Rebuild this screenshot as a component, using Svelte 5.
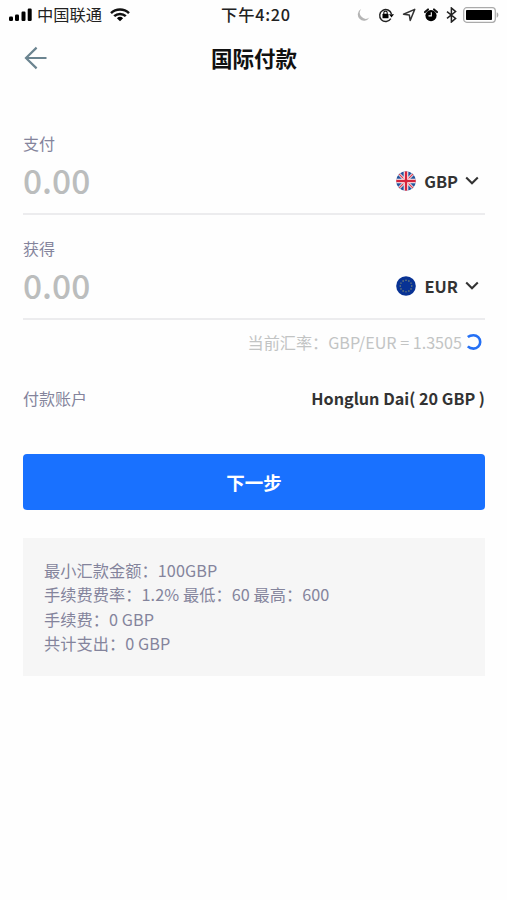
<script lang="ts">
	type Tfield = {
		label: string;
		currency: string;
	};

	const fields: Tfield[] = [
		{ label: '支付', currency: 'GBP' },
		{ label: '获得', currency: 'EUR' }
	];

	const details: string[] = [
		'最小汇款金额：100GBP',
		'手续费费率：1.2% 最低：60 最高：600',
		'手续费：0 GBP',
		'共计支出：0 GBP'
	];

	const stars = Array.from({ length: 12 }, (_, i) => ({
		x: 10 + 5.8 * Math.cos((i * Math.PI) / 6),
		y: 10 + 5.8 * Math.sin((i * Math.PI) / 6)
	}));
</script>

<div class="screen">
	<div class="status">
		<div class="carrier">
			<svg width="24" height="14" viewBox="0 0 24 14">
				<rect x="0" y="8.5" width="4" height="4.5" rx="1.2" />
				<rect x="6" y="6.5" width="4" height="6.5" rx="1.2" />
				<rect x="12.5" y="3.5" width="4" height="9.5" rx="1.2" />
				<rect x="18.7" y="0.5" width="4" height="12.5" rx="1.2" />
			</svg>
			<span>中国联通</span>
			<svg class="wifi" width="20" height="14" viewBox="0 0 20 14">
				<path d="M1 5.2a13 13 0 0 1 18 0M4.2 8.2a8.4 8.4 0 0 1 11.6 0" fill="none" stroke="#111" stroke-width="2.5" />
				<path d="M10 13.3 6.9 10.2a4.5 4.5 0 0 1 6.2 0z" />
			</svg>
		</div>
		<div class="time">下午4:20</div>
		<div class="indicators">
			<svg width="13" height="14" viewBox="0 0 13 14">
				<path d="M4.2 1A6 6 0 0 0 12.4 9.6 6.2 6.2 0 1 1 4.2 1z" fill="#b5b5b5" />
			</svg>
			<svg width="16" height="16" viewBox="0 0 16 16">
				<path d="M12.8 11.7A6 6 0 1 1 13.5 7" fill="none" stroke="#222" stroke-width="1.4" />
				<path d="M11 7.3h5l-2.5 3.2z" />
				<rect x="4.5" y="6.8" width="6" height="4.5" rx="0.6" />
				<path d="M5.8 7V5.8a1.7 1.7 0 0 1 3.4 0V7" fill="none" stroke="#111" stroke-width="1.1" />
			</svg>
			<svg width="14" height="14" viewBox="0 0 14 14">
				<path d="M12.7 1.4 8.2 12.5 7.3 6.9 1.5 6.2z" fill="none" stroke="#333" stroke-width="1.5" stroke-linejoin="round" />
			</svg>
			<svg width="14" height="14" viewBox="0 0 14 14">
				<circle cx="7" cy="7.6" r="5.6" />
				<path d="M1 4.1 4 1.4M13 4.1 10 1.4" stroke="#111" stroke-width="2" stroke-linecap="round" />
				<path d="M7.3 4.3v3.6H4.5" fill="none" stroke="#fff" stroke-width="1.1" />
			</svg>
			<svg width="11" height="16" viewBox="0 0 11 16">
				<path d="m1 4.6 8.6 6.8L5.4 15V1l4.2 3.6L1 11.4" fill="none" stroke="#222" stroke-width="1.5" />
			</svg>
			<svg class="battery" width="36" height="16" viewBox="0 0 36 16">
				<rect x="0.7" y="0.7" width="31.6" height="14.6" rx="3" fill="#fff" stroke="#aaa" stroke-width="1.2" />
				<rect x="3" y="3" width="26" height="10" rx="0.8" fill="#000" />
				<path d="M33.7 5.3c2.2.8 2.2 4.6 0 5.4z" fill="#aaa" />
			</svg>
		</div>
	</div>

	<header>
		<button class="back" aria-label="返回">
			<svg width="24" height="24" viewBox="0 0 24 24" fill="none" stroke="#6b8490" stroke-width="2.2">
				<path d="M22.5 12H2M12.6 1.6 2 12l10.6 10.4" />
			</svg>
		</button>
		<h1>国际付款</h1>
	</header>

	<main>
		{#each fields as field}
			<section class="field">
				<div class="label">{field.label}</div>
				<div class="row">
					<span class="amount">0.00</span>
					<button class="currency">
						{#if field.currency === 'GBP'}
							<svg width="20" height="20" viewBox="0 0 20 20">
								<clipPath id="round"><circle cx="10" cy="10" r="9.8" /></clipPath>
								<g clip-path="url(#round)">
									<rect width="20" height="20" fill="#26549b" />
									<path d="m2 2 16 16M18 2 2 18" stroke="#fff" stroke-width="2.8" />
									<path d="m2 2 16 16M18 2 2 18" stroke="#d8455a" stroke-width="1.3" />
									<path d="M10 0v20M0 10h20" stroke="#fff" stroke-width="4.6" />
									<path d="M10 0v20M0 10h20" stroke="#d6243c" stroke-width="2.5" />
								</g>
							</svg>
						{:else}
							<svg width="20" height="20" viewBox="0 0 20 20">
								<circle cx="10" cy="10" r="9.8" fill="#083294" />
								{#each stars as star}
									<circle cx={star.x} cy={star.y} r="0.65" fill="#a4a568" />
								{/each}
							</svg>
						{/if}
						<span class="code">{field.currency}</span>
						<svg width="14" height="10" viewBox="0 0 14 10">
							<path d="m1.2 1.6 5.8 5.6 5.8-5.6" fill="none" stroke="#333" stroke-width="2.1" />
						</svg>
					</button>
				</div>
			</section>
		{/each}

		<div class="rate">
			<span>当前汇率：GBP/EUR = 1.3505</span>
			<svg width="16" height="18" viewBox="0 0 16 18">
				<path d="M1.8 4Q4 2.2 7.5 2.2A6.7 6.7 0 0 1 7.5 15.6Q4 15.6 1.8 13.4" fill="none" stroke="#2470f5" stroke-width="2.6" />
			</svg>
		</div>

		<div class="account">
			<span class="label">付款账户</span>
			<span class="owner">Honglun Dai( 20 GBP )</span>
		</div>

		<button class="next">下一步</button>

		<div class="details">
			{#each details as line}
				<p>{line}</p>
			{/each}
		</div>
	</main>
</div>

<style>
	:global(body) {
		margin: 0;
		background: #fefefe;
	}

	.screen {
		min-height: 900px;
		font-family: 'Noto Sans CJK SC', sans-serif;
		color: #333;
	}

	svg {
		display: block;
		flex: none;
	}

	button {
		border: 0;
		padding: 0;
		background: none;
		font-family: inherit;
		color: inherit;
	}

	.status {
		display: grid;
		grid-template-columns: 1fr auto 1fr;
		align-items: center;
		height: 29px;
		padding: 0 8px 0 9px;
		font-size: 16.3px;
		line-height: 29px;
		color: #222;
	}

	.carrier {
		display: flex;
		align-items: center;
		gap: 4px;
	}

	.wifi {
		margin-left: 4px;
	}

	.time {
		padding-left: 4px;
		font-weight: 500;
		letter-spacing: 0.75px;
	}

	.indicators {
		display: flex;
		justify-content: flex-end;
		align-items: center;
		gap: 8px;
	}

	.battery {
		margin-left: -2px;
	}

	header {
		display: grid;
		grid-template-columns: 1fr auto 1fr;
		align-items: center;
		height: 58px;
		padding: 0 23px 0 24px;
	}

	.back {
		justify-self: start;
	}

	h1 {
		margin: 0;
		font-size: 21.5px;
		line-height: 30px;
		font-weight: 700;
		color: #111;
	}

	main {
		padding: 43px 22px 0 23px;
	}

	.field {
		height: 83px;
		border-bottom: 2px solid #ececee;
		margin-bottom: 20px;
	}

	.label {
		font-size: 16px;
		line-height: 26px;
		color: #84849c;
	}

	.row {
		display: flex;
		justify-content: space-between;
		align-items: center;
		height: 49px;
	}

	.amount {
		font-size: 33.5px;
		line-height: 48px;
		padding-bottom: 2px;
		font-weight: 500;
		color: #bbbdbd;
	}

	.currency {
		display: flex;
		align-items: center;
		padding-right: 6px;
		font-size: 16.4px;
		line-height: 26px;
		font-weight: 700;
	}

	.code {
		margin: 0 7px 0 8px;
	}

	.rate {
		display: flex;
		justify-content: flex-end;
		align-items: center;
		gap: 4px;
		height: 26px;
		margin-top: -11px;
		padding-right: 3px;
		font-size: 16.15px;
		color: #c2c4c4;
	}

	.account {
		display: flex;
		justify-content: space-between;
		align-items: center;
		height: 26px;
		margin: 30px 0 43px;
	}

	.owner {
		font-size: 16.2px;
		font-weight: 700;
	}

	.next {
		display: block;
		width: 100%;
		height: 56px;
		border-radius: 4px;
		background: #1971ff;
		font-size: 18.5px;
		font-weight: 700;
		color: #fff;
	}

	.details {
		height: 98px;
		margin-top: 28px;
		padding: 20px 21px;
		background: #f6f6f6;
		font-size: 16.2px;
		line-height: 24.4px;
		letter-spacing: 0.07px;
		color: #84849c;
	}

	.details p {
		margin: 0;
	}
</style>
